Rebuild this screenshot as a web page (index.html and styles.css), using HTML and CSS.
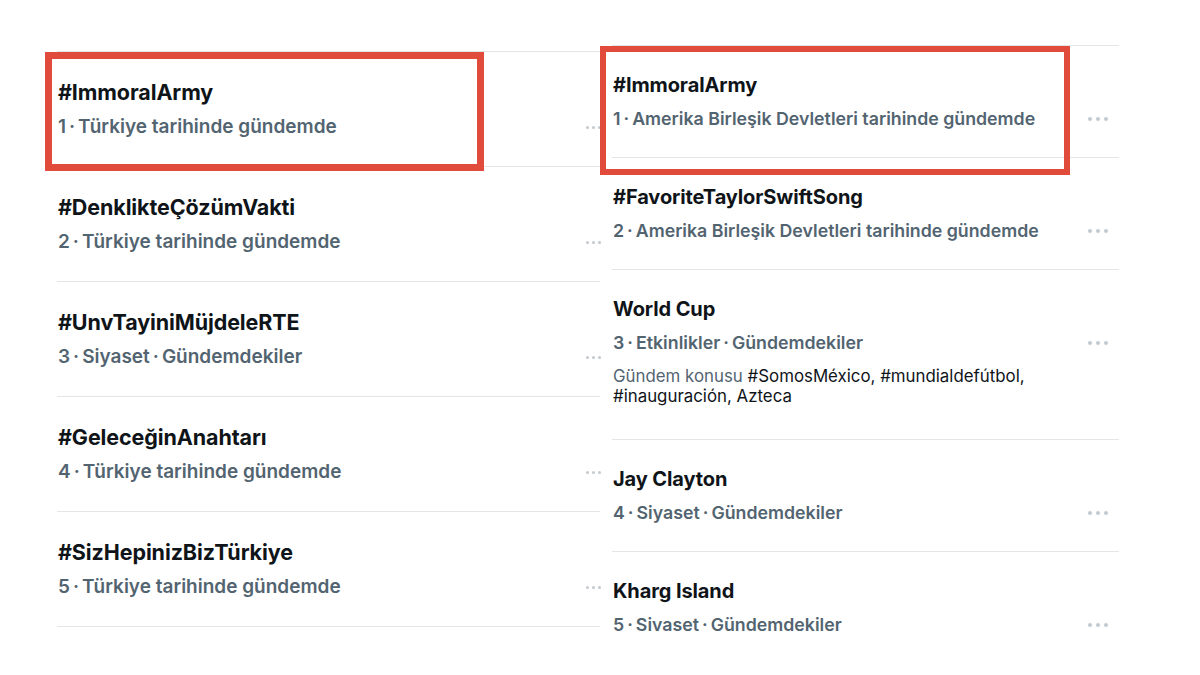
FILE: index.html
```html
<!DOCTYPE html>
<html lang="tr">
<head>
<meta charset="utf-8">
<title>Gündem</title>
<link rel="stylesheet" href="styles.css">
</head>
<body>
<div class="page">
  <section class="col col-left">
    <div class="trend">
      <div class="title">#ImmoralArmy</div>
      <div class="meta"><span>1<span class="sep">·</span>Türkiye tarihinde gündemde</span><span class="dots"><i></i><i></i><i></i></span></div>
    </div>
    <div class="trend">
      <div class="title">#DenklikteÇözümVakti</div>
      <div class="meta"><span>2<span class="sep">·</span>Türkiye tarihinde gündemde</span><span class="dots"><i></i><i></i><i></i></span></div>
    </div>
    <div class="trend">
      <div class="title">#UnvTayiniMüjdeleRTE</div>
      <div class="meta"><span>3<span class="sep">·</span>Siyaset<span class="sep">·</span>Gündemdekiler</span><span class="dots"><i></i><i></i><i></i></span></div>
    </div>
    <div class="trend">
      <div class="title">#GeleceğinAnahtarı</div>
      <div class="meta"><span>4<span class="sep">·</span>Türkiye tarihinde gündemde</span><span class="dots"><i></i><i></i><i></i></span></div>
    </div>
    <div class="trend">
      <div class="title">#SizHepinizBizTürkiye</div>
      <div class="meta"><span>5<span class="sep">·</span>Türkiye tarihinde gündemde</span><span class="dots"><i></i><i></i><i></i></span></div>
    </div>
  </section>

  <section class="col col-right">
    <div class="trend">
      <div class="title">#ImmoralArmy</div>
      <div class="meta"><span>1<span class="sep">·</span>Amerika Birleşik Devletleri tarihinde gündemde</span><span class="dots"><i></i><i></i><i></i></span></div>
    </div>
    <div class="trend">
      <div class="title">#FavoriteTaylorSwiftSong</div>
      <div class="meta"><span>2<span class="sep">·</span>Amerika Birleşik Devletleri tarihinde gündemde</span><span class="dots"><i></i><i></i><i></i></span></div>
    </div>
    <div class="trend trend-tall">
      <div class="title">World Cup</div>
      <div class="meta"><span>3<span class="sep">·</span>Etkinlikler<span class="sep">·</span>Gündemdekiler</span><span class="dots"><i></i><i></i><i></i></span></div>
      <div class="desc"><span class="muted">Gündem konusu</span> #SomosMéxico, #mundialdefútbol,<br>#inauguración, Azteca</div>
    </div>
    <div class="trend">
      <div class="title">Jay Clayton</div>
      <div class="meta"><span>4<span class="sep">·</span>Siyaset<span class="sep">·</span>Gündemdekiler</span><span class="dots"><i></i><i></i><i></i></span></div>
    </div>
    <div class="trend trend-last">
      <div class="title">Kharg Island</div>
      <div class="meta"><span>5<span class="sep">·</span>Sivaset<span class="sep">·</span>Gündemdekiler</span><span class="dots"><i></i><i></i><i></i></span></div>
    </div>
  </section>
</div>
<div class="highlight highlight-left"></div>
<div class="highlight highlight-right"></div>
</body>
</html>
```

FILE: styles.css
```css
html, body {
  margin: 0;
  padding: 0;
  background: #ffffff;
}
body {
  width: 1200px;
  height: 675px;
  overflow: hidden;
  position: relative;
  font-family: Inter, "Noto Sans", "Liberation Sans", sans-serif;
  color: #0f1419;
}
.page {
  display: flex;
  align-items: flex-start;
}
.col {
  display: flex;
  flex-direction: column;
  border-top: 1px solid #e3e6e8;
}
.col-left {
  margin-left: 57px;
  margin-top: 51px;
  width: 543px;
}
.col-right {
  margin-left: 12px;
  margin-top: 45px;
  width: 507px;
}
.trend {
  border-bottom: 1px solid #e3e6e8;
  display: flex;
  flex-direction: column;
  padding: 27px 0 27px 1px;
}
.col-right .trend-tall {
  padding-bottom: 33px;
}
.col-right .trend-last {
  border-bottom: none;
}
.title {
  font-weight: 700;
  letter-spacing: -0.1px;
}
.col-left .title {
  font-size: 21.5px;
  line-height: 26px;
}
.col-right .title {
  font-size: 20px;
  line-height: 24px;
}
.meta {
  display: flex;
  justify-content: space-between;
  align-items: center;
  color: #536471;
  font-weight: 600;
}
.col-left .meta {
  margin-top: 10px;
  font-size: 19px;
  line-height: 24px;
}
.col-right .meta {
  margin-top: 11px;
  font-size: 17.75px;
  line-height: 22px;
}
.sep {
  margin: 0 3px;
}
.dots {
  display: flex;
  align-items: center;
}
.dots i {
  display: block;
  border-radius: 50%;
  background: #c3c9ce;
}
.col-left .dots {
  gap: 3px;
  margin-right: -1px;
}
.col-left .dots i {
  width: 3px;
  height: 3px;
}
.col-right .dots {
  gap: 4px;
  margin-right: 11px;
}
.col-right .dots i {
  width: 4px;
  height: 4px;
}
.desc {
  margin-top: 12px;
  font-size: 16.85px;
  line-height: 20px;
  font-weight: 400;
  color: #0f1419;
}
.muted {
  color: #536471;
}
.highlight {
  position: absolute;
  box-sizing: border-box;
  border: 7px solid #e04b3c;
}
.highlight-left {
  left: 45px;
  top: 52px;
  width: 439px;
  height: 119px;
}
.highlight-right {
  left: 600px;
  top: 46px;
  width: 470px;
  height: 129px;
  border-width: 6px;
}
```
